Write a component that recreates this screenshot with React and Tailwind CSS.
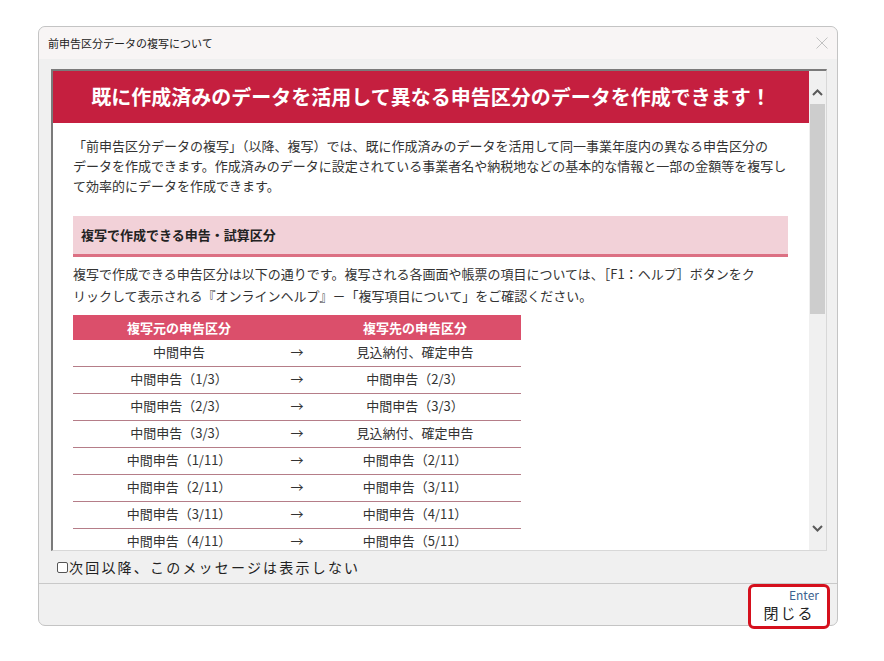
const rows = [
  ["中間申告", "見込納付、確定申告"],
  ["中間申告（1/3）", "中間申告（2/3）"],
  ["中間申告（2/3）", "中間申告（3/3）"],
  ["中間申告（3/3）", "見込納付、確定申告"],
  ["中間申告（1/11）", "中間申告（2/11）"],
  ["中間申告（2/11）", "中間申告（3/11）"],
  ["中間申告（3/11）", "中間申告（4/11）"],
  ["中間申告（4/11）", "中間申告（5/11）"],
];

function Chevron({ up }) {
  return (
    <svg width="11" height="7" viewBox="0 0 11 7" className="block mx-auto">
      <path
        d={up ? "M1 6 L5.5 1.5 L10 6" : "M1 1 L5.5 5.5 L10 1"}
        fill="none"
        stroke="#5a5a5a"
        strokeWidth="2"
      />
    </svg>
  );
}

export default function App() {
  return (
    <div className="w-[884px] h-[661px] bg-white pt-[26px] pl-[38px] [font-family:'Noto_Sans_CJK_JP','Noto_Sans',sans-serif] text-[#333]">
      <div className="w-[800px] h-[600px] rounded-[7px] border border-[#c4c4c4] bg-[#f0f0f0] flex flex-col">
        {/* title bar */}
        <div className="h-[32px] shrink-0 rounded-t-[7px] bg-[#f8f5f5] flex items-center justify-between pl-[9px] pr-[9px]">
          <span className="text-[11px] text-[#222] leading-none">前申告区分データの複写について</span>
          <svg width="12" height="12" viewBox="0 0 12 12">
            <path d="M0.5 0.5 L11.5 11.5 M11.5 0.5 L0.5 11.5" stroke="#c2c2c2" strokeWidth="1" />
          </svg>
        </div>

        {/* embedded page */}
        <div className="mt-[10px] ml-[12px] w-[776px] h-[482px] shrink-0 border-t-2 border-l-2 border-[#7a7a7a] border-r border-b border-r-[#d8d8d8] border-b-[#d8d8d8] flex">
          <div className="flex-1 bg-white overflow-hidden">
            <div className="h-[52px] bg-[#c51f3f] flex items-center justify-center text-white text-[20px] font-bold">
              既に作成済みのデータを活用して異なる申告区分のデータを作成できます！
            </div>
            <div className="pl-[20px] pr-[21px]">
              <p className="mt-[13px] text-[13px] leading-[20px] whitespace-nowrap">
                「前申告区分データの複写」（以降、複写）では、既に作成済みのデータを活用して同一事業年度内の異なる申告区分の
                <br />
                データを作成できます。作成済みのデータに設定されている事業者名や納税地などの基本的な情報と一部の金額等を複写し
                <br />
                て効率的にデータを作成できます。
              </p>
              <div className="mt-[20px] h-[41px] bg-[#f2d1d8] border-b-[3px] border-[#dc7083] flex items-center pl-[8px] text-[13px] font-bold text-[#222]">
                複写で作成できる申告・試算区分
              </div>
              <p className="mt-[6px] text-[13px] leading-[22px] whitespace-nowrap">
                複写で作成できる申告区分は以下の通りです。複写される各画面や帳票の項目については、［F1：ヘルプ］ボタンをク
                <br />
                リックして表示される『オンラインヘルプ』－「複写項目について」をご確認ください。
              </p>
              <div className="mt-[8px] w-[448px] text-[13px]">
                <div className="h-[25px] bg-[#db4f6b] text-white font-bold grid grid-cols-[212px_24px_212px] items-center text-center">
                  <span>複写元の申告区分</span>
                  <span></span>
                  <span>複写先の申告区分</span>
                </div>
                {rows.map(([from, to]) => (
                  <div
                    key={from}
                    className="h-[27px] pb-[2px] border-b border-[#b57d88] grid grid-cols-[212px_24px_212px] items-center text-center whitespace-nowrap"
                  >
                    <span>{from}</span>
                    <span>→</span>
                    <span>{to}</span>
                  </div>
                ))}
              </div>
            </div>
          </div>
          {/* scrollbar */}
          <div className="w-[17px] shrink-0 bg-[#f0f0f0] flex flex-col">
            <div className="h-[33px] pt-[18px]">
              <Chevron up />
            </div>
            <div className="mx-[1px] h-[210px] bg-[#cdcdcd]" />
            <div className="flex-1" />
            <div className="h-[25px]">
              <Chevron />
            </div>
          </div>
        </div>

        {/* checkbox row */}
        <div className="h-[32px] shrink-0 flex items-center pl-[18px] gap-[1px]">
          <span className="w-[11px] h-[11px] rounded-[2px] border border-[#555] bg-white" />
          <span className="text-[14px] tracking-[2.2px] text-[#222] leading-none">次回以降、このメッセージは表示しない</span>
        </div>

        {/* footer */}
        <div className="border-t border-[#c9c9c9] flex-1 flex justify-end pr-[7px]">
          <div className="w-[82px] h-[45px] rounded-[6px] border-[3px] border-[#d5101d] bg-white flex flex-col px-[2px]">
            <span className="self-end pr-[6px] pt-[1px] text-[12px] leading-[14px] text-[#3d6290]">Enter</span>
            <span className="self-center pt-[2px] text-[15px] leading-[18px] tracking-[2px] text-[#222]">閉じる</span>
          </div>
        </div>
      </div>
    </div>
  );
}
